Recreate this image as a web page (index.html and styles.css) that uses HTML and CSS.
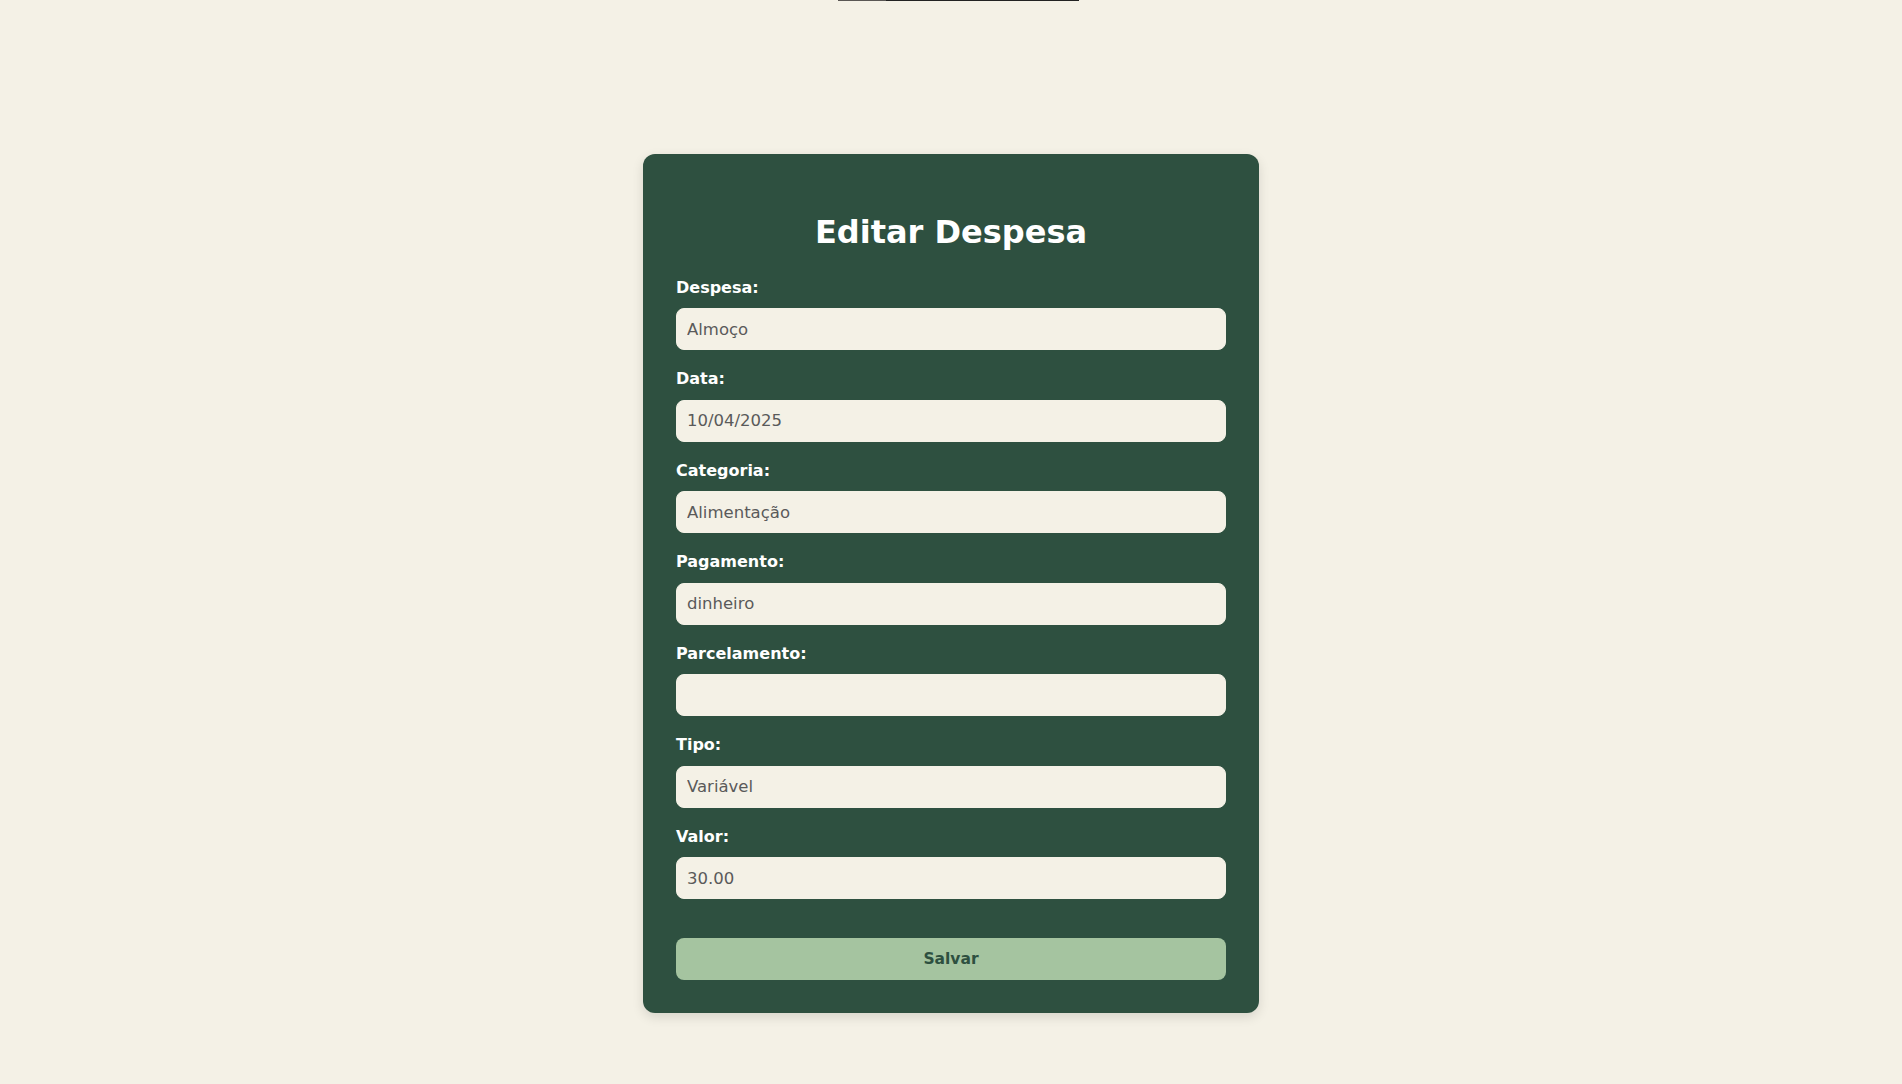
FILE: index.html
```html
<!DOCTYPE html>
<html lang="pt-BR">
<head>
<meta charset="utf-8">
<title>Editar Despesa</title>
<link rel="stylesheet" href="styles.css">
</head>
<body>
<div class="topline"><span class="topline-a"></span><span class="topline-b"></span></div>
<main class="page">
  <form class="card">
    <h2 class="title">Editar Despesa</h2>
    <div class="fields">
      <div class="field">
        <label class="label">Despesa:</label>
        <input class="input" type="text" value="Almoço">
      </div>
      <div class="field">
        <label class="label">Data:</label>
        <input class="input" type="text" value="10/04/2025">
      </div>
      <div class="field">
        <label class="label">Categoria:</label>
        <input class="input" type="text" value="Alimentação">
      </div>
      <div class="field">
        <label class="label">Pagamento:</label>
        <input class="input" type="text" value="dinheiro">
      </div>
      <div class="field">
        <label class="label">Parcelamento:</label>
        <input class="input" type="text" value="">
      </div>
      <div class="field">
        <label class="label">Tipo:</label>
        <input class="input" type="text" value="Variável">
      </div>
      <div class="field">
        <label class="label">Valor:</label>
        <input class="input" type="text" value="30.00">
      </div>
    </div>
    <button class="btn" type="button">Salvar</button>
  </form>
</main>
</body>
</html>
```
FILE: styles.css
```css
* { box-sizing: border-box; }
html, body {
  margin: 0;
  padding: 0;
  background: #f4f1e6;
  font-family: "DejaVu Sans", Inter, sans-serif;
  height: 100%;
  overflow: hidden;
}
.topline {
  display: flex;
  height: 1px;
  padding-left: 838px;
}
.topline-a { width: 48px; background: #5a5754; }
.topline-b { width: 193px; background: #222; }
.page {
  display: flex;
  justify-content: center;
  padding-top: 153px;
}
.card {
  width: 616px;
  background: #2e5040;
  border-radius: 12px;
  padding: 59px 33px 33px;
  box-shadow: 0 4px 12px rgba(0, 0, 0, 0.12);
  display: flex;
  flex-direction: column;
}
.title {
  margin: 0 0 25.5px;
  font-size: 32px;
  line-height: 39px;
  font-weight: 600;
  color: #fff;
  text-align: center;
}
.fields {
  display: flex;
  flex-direction: column;
  gap: 19px;
}
.field {
  display: flex;
  flex-direction: column;
}
.label {
  font-size: 16px;
  line-height: 19.5px;
  font-weight: 700;
  color: #fff;
  margin-bottom: 11px;
}
.input {
  width: 100%;
  height: 42px;
  padding: 0 10px;
  border: 1px solid #f4f1e6;
  border-radius: 8px;
  background: #f4f1e6;
  font-family: inherit;
  font-size: 16.5px;
  font-weight: 400;
  color: #5a5a5a;
  outline: none;
}
.btn {
  margin-top: 39px;
  height: 42px;
  border: none;
  border-radius: 8px;
  background: #a5c4a0;
  color: #2e5040;
  font-family: inherit;
  font-size: 15.5px;
  font-weight: 700;
}
```
